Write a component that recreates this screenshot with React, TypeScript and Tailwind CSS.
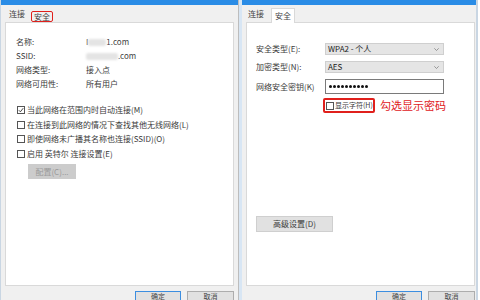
import React from "react";

function Box({ checked = false }: { checked?: boolean }) {
  return (
    <span className="flex h-[8px] w-[8px] shrink-0 items-center justify-center border border-[#555] bg-white">
      {checked && (
        <svg width="6" height="6" viewBox="0 0 6 6" fill="none">
          <path d="M0.8 3.2 L2.4 4.8 L5.2 1.2" stroke="#333" strokeWidth="0.9" />
        </svg>
      )}
    </span>
  );
}

function Select({ value }: { value: string }) {
  return (
    <div className="flex h-[12px] w-[119px] items-center justify-between border border-[#cfcfcf] bg-[#e5e5e5] pl-[2px] pr-[4px] text-[8px] text-[#222]">
      <span>{value}</span>
      <svg width="5" height="3" viewBox="0 0 5 3" fill="none">
        <path d="M0.3 0.3 L2.5 2.5 L4.7 0.3" stroke="#777" strokeWidth="0.7" />
      </svg>
    </div>
  );
}

function Buttons() {
  return (
    <div className="flex h-[14px] justify-end gap-[6px] pt-[5px]">
      <div className="flex h-[18px] w-[46px] justify-center border border-[#3c8ee0] bg-[#e1e1e1] pt-[1px] text-[7px] text-[#444]">
        确定
      </div>
      <div className="flex h-[18px] w-[47px] justify-center border border-[#adadad] bg-[#e1e1e1] pt-[1px] text-[7px] text-[#444]">
        取消
      </div>
    </div>
  );
}

function Blur({ w }: { w: string }) {
  return <span className={`inline-block h-[7px] rounded-[2px] bg-[#e4e4e4] blur-[1px] ${w}`} />;
}

const dots = [0, 1, 2, 3, 4, 5, 6, 7, 8, 9];

export default function App() {
  return (
    <div className="flex h-[300px] w-[480px] overflow-hidden bg-white font-['Noto_Sans_CJK_SC','Noto_Sans',sans-serif] text-[8px] leading-none text-[#3a3a3a]">
      {/* left window */}
      <div className="flex w-[238px] flex-col border-l border-[#c9d6e3]">
        <div className="h-[5px] bg-[#2a8ce6]" />
        <div className="flex flex-1 flex-col bg-[#f0f0f0] pl-[4px] pr-[4px]">
          <div className="flex h-[17px] items-end">
            <span className="pb-[4px] pl-[4px] text-[#444]">连接</span>
            <span className="ml-[6px] flex h-[11px] w-[22px] items-center justify-center rounded-[2px] border border-[#e0201c] text-[#444]">
              安全
            </span>
          </div>
          <div className="flex flex-1 flex-col border border-[#d9d9d9] bg-white pl-[10px] pt-[12px]">
            <div className="flex h-[14px] items-center">
              <span className="w-[70px]">名称:</span>
              <span className="flex items-center text-[#444]">
                I<Blur w="w-[18px]" />1.com
              </span>
            </div>
            <div className="flex h-[14px] items-center">
              <span className="w-[70px]">SSID:</span>
              <span className="flex items-center text-[#444]">
                <Blur w="w-[32px]" />
                .com
              </span>
            </div>
            <div className="flex h-[14px] items-center">
              <span className="w-[70px]">网络类型:</span>
              <span>接入点</span>
            </div>
            <div className="flex h-[14px] items-center">
              <span className="w-[70px]">网络可用性:</span>
              <span>所有用户</span>
            </div>

            <div className="mt-[12px] flex flex-col pl-[1px]">
              <label className="flex h-[14px] items-center gap-[2px]">
                <Box checked />
                当此网络在范围内时自动连接(M)
              </label>
              <label className="flex h-[15px] items-center gap-[2px]">
                <Box />
                在连接到此网络的情况下查找其他无线网络(L)
              </label>
              <label className="flex h-[14px] items-center gap-[2px]">
                <Box />
                即使网络未广播其名称也连接(SSID)(O)
              </label>
              <label className="flex h-[15px] items-center gap-[2px]">
                <Box />
                启用 英特尔 连接设置(E)
              </label>
              <div className="ml-[11px] mt-[3px] flex h-[15px] w-[48px] items-center justify-center border border-[#cccccc] bg-[#cccccc] text-[#9a9a9a]">
                配置(C)...
              </div>
            </div>
          </div>
          <Buttons />
        </div>
      </div>

      {/* gap between windows */}
      <div className="w-[4px] border-l border-[#bdbdbd] bg-[#d8e6f4]" />

      {/* right window */}
      <div className="flex w-[236px] flex-col border-r-2 border-[#c9d6e3]">
        <div className="h-[5px] bg-[#2a8ce6]" />
        <div className="flex flex-1 flex-col bg-[#f0f0f0] pl-[4px] pr-[1px]">
          <div className="flex h-[17px] items-end">
            <span className="pb-[4px] pl-[2px] text-[#444]">连接</span>
            <span className="relative top-[1px] ml-[7px] flex h-[15px] w-[24px] justify-center border border-b-0 border-[#d9d9d9] bg-white pt-[3px] text-[#444]">
              安全
            </span>
          </div>
          <div className="flex flex-1 flex-col border border-[#d9d9d9] bg-white pl-[9px] pt-[20px]">
            <div className="flex flex-col gap-[6px]">
              <div className="flex h-[12px] items-center">
                <span className="w-[69px]">安全类型(E):</span>
                <Select value="WPA2 - 个人" />
              </div>
              <div className="flex h-[12px] items-center">
                <span className="w-[69px]">加密类型(N):</span>
                <Select value="AES" />
              </div>
              <div className="flex h-[15px] items-center">
                <span className="w-[69px]">网络安全密钥(K)</span>
                <div className="flex h-[15px] w-[119px] items-center gap-[1px] border border-[#7a7a7a] bg-white pl-[3px]">
                  {dots.map((d) => (
                    <span key={d} className="h-[3px] w-[3px] rounded-full bg-[#111]" />
                  ))}
                </div>
              </div>
            </div>
            <div className="ml-[67px] mt-[4px] flex items-center gap-[5px]">
              <div className="flex h-[15px] w-[52px] items-center gap-[1px] rounded-[2px] border-2 border-[#e0201c] pl-[1px] text-[7px]">
                <Box />
                显示字符(H)
              </div>
              <span className="text-[11px] text-[#e0201c]">勾选显示密码</span>
            </div>
            <div className="mt-[103px] flex h-[16px] w-[77px] items-center justify-center border border-[#cfcfcf] bg-[#e1e1e1]">
              高级设置(D)
            </div>
          </div>
          <Buttons />
        </div>
      </div>
    </div>
  );
}
